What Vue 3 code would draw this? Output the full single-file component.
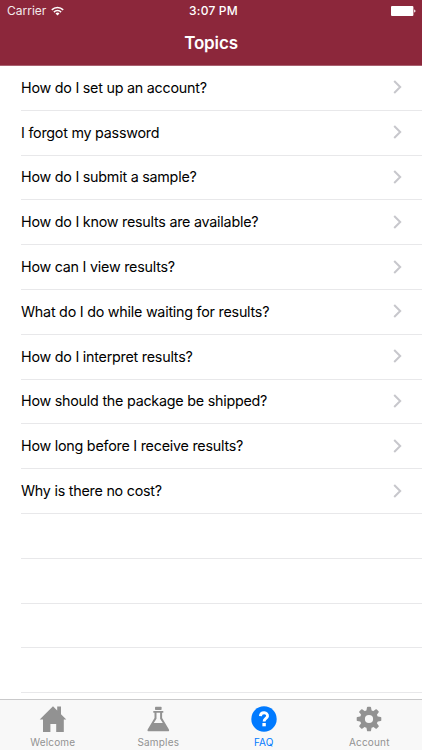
<script setup>
const topics = [
  'How do I set up an account?',
  'I forgot my password',
  'How do I submit a sample?',
  'How do I know results are available?',
  'How can I view results?',
  'What do I do while waiting for results?',
  'How do I interpret results?',
  'How should the package be shipped?',
  'How long before I receive results?',
  'Why is there no cost?',
]
const emptyRows = 4
const tabs = [
  { id: 'welcome', label: 'Welcome' },
  { id: 'samples', label: 'Samples' },
  { id: 'faq', label: 'FAQ' },
  { id: 'account', label: 'Account' },
]
const active = 'faq'
const teeth = [0, 45, 90, 135, 180, 225, 270, 315]
</script>

<template>
  <div class="screen">
    <header class="header">
      <div class="status">
        <div class="carrier">
          <span>Carrier</span>
          <svg class="wifi" viewBox="0 0 13 10" width="13" height="10">
            <g fill="none" stroke="#fff" stroke-width="1.5">
              <path d="M0.8 3.9a8.1 8.1 0 0 1 11.4 0" />
              <path d="M2.9 6.1a5.1 5.1 0 0 1 7.2 0" />
            </g>
            <path d="M6.5 9.5 4.5 7.5a2.9 2.9 0 0 1 4 0z" fill="#fff" />
          </svg>
        </div>
        <div class="time">3:07 PM</div>
        <div class="power">
          <svg viewBox="0 0 25 10" width="25" height="10">
            <rect x="0" y="0" width="22.4" height="10" rx="1" fill="#fff" />
            <path d="M23.2 3.4c1.7.3 1.7 2.9 0 3.2z" fill="#fff" />
          </svg>
        </div>
      </div>
      <h1 class="title">Topics</h1>
    </header>

    <main class="list">
      <div v-for="topic in topics" :key="topic" class="row">
        <span class="label">{{ topic }}</span>
        <svg class="chevron" viewBox="0 0 9 14" width="9" height="14">
          <path d="M1.2 1 7.2 7l-6 6" fill="none" stroke="#c7c7cc" stroke-width="2" />
        </svg>
      </div>
      <div v-for="n in emptyRows" :key="n" class="row"></div>
    </main>

    <nav class="tabs">
      <div v-for="tab in tabs" :key="tab.id" class="tab" :class="{ active: tab.id === active }">
        <svg v-if="tab.id === 'welcome'" viewBox="0 0 28 28" width="28" height="28" fill="currentColor">
          <path d="M14 1.3 18.2 5.5V1.5H22v7.8l5.3 5.3H24.8V27H17.2v-8h-5.8v8H4V14.6H.7z" />
        </svg>
        <svg v-else-if="tab.id === 'samples'" viewBox="0 0 28 28" width="28" height="28" fill="currentColor">
          <rect x="11" y="1.7" width="6.6" height="3.2" rx=".7" />
          <path fill-rule="evenodd" d="M9.3 6h10v1.8h-1.2v5.2l6.7 11.3q1 2-1 2H4.8q-2 0-1-2l6.7-11.3V7.8H9.3zM12.5 7.8v6L9.8 18h9l-2.7-4.2v-6z" />
        </svg>
        <svg v-else-if="tab.id === 'faq'" viewBox="0 0 28 28" width="28" height="28" fill="currentColor">
          <circle cx="14" cy="14" r="12.7" />
          <path d="M10.4 11.2c.3-4.9 7.7-4.3 7.1 0-.3 2.3-3.4 2.2-3.4 5.2" fill="none" stroke="#fff" stroke-width="2.9" />
          <rect x="12.4" y="18" width="3.4" height="3.3" fill="#fff" />
        </svg>
        <svg v-else viewBox="0 0 28 28" width="28" height="28" fill="currentColor">
          <circle cx="14" cy="14" r="6.6" fill="none" stroke="currentColor" stroke-width="5" />
          <path v-for="angle in teeth" :key="angle" d="M11.2 6.4 12 2.3q.2-.6.8-.6h2.4q.6 0 .8.6l.8 4.1z" :transform="`rotate(${angle} 14 14)`" />
        </svg>
        <span class="tab-label">{{ tab.label }}</span>
      </div>
    </nav>
  </div>
</template>

<style>
body {
  margin: 0;
  overflow: hidden;
}
</style>

<style scoped>
.screen {
  width: 422px;
  height: 750px;
  display: flex;
  flex-direction: column;
  overflow: hidden;
  background: #fff;
  font-family: Inter, "Liberation Sans", sans-serif;
}
.header {
  height: 65px;
  flex: none;
  background: #8c273b;
  border-bottom: 1px solid #a9606f;
  color: #fff;
}
.status {
  height: 21px;
  display: grid;
  grid-template-columns: 1fr auto 1fr;
  align-items: center;
  padding: 0 6px 0 7px;
  font-size: 12px;
}
.carrier {
  display: flex;
  align-items: center;
  gap: 5px;
}
.carrier span {
  opacity: 0.9;
}
.time {
  padding-left: 4px;
  font-weight: 500;
  letter-spacing: 0.2px;
}
.power {
  display: flex;
  justify-content: flex-end;
}
.title {
  margin: 0;
  text-align: center;
  font-size: 17px;
  line-height: 44px;
  font-weight: 600;
  letter-spacing: -0.15px;
}
.list {
  flex: 1;
  min-height: 0;
  overflow: hidden;
}
.row {
  height: 44.8px;
  box-sizing: border-box;
  margin-left: 21px;
  padding: 0 20.5px 1px 0;
  border-bottom: 1px solid #e8e8ea;
  display: flex;
  align-items: center;
  justify-content: space-between;
}
.label {
  font-size: 14.3px;
  letter-spacing: -0.23px;
  color: #000;
  white-space: nowrap;
}
.tabs {
  height: 51px;
  flex: none;
  box-sizing: border-box;
  border-top: 1px solid #c9c9ca;
  background: #f8f8f8;
  display: grid;
  grid-template-columns: repeat(4, 1fr);
}
.tab {
  display: flex;
  flex-direction: column;
  align-items: center;
  padding-top: 5px;
  color: #929292;
}
.tab.active {
  color: #007aff;
}
.tab-label {
  font-size: 10px;
  line-height: 12px;
  margin-top: 3px;
  letter-spacing: 0.18px;
}
</style>
